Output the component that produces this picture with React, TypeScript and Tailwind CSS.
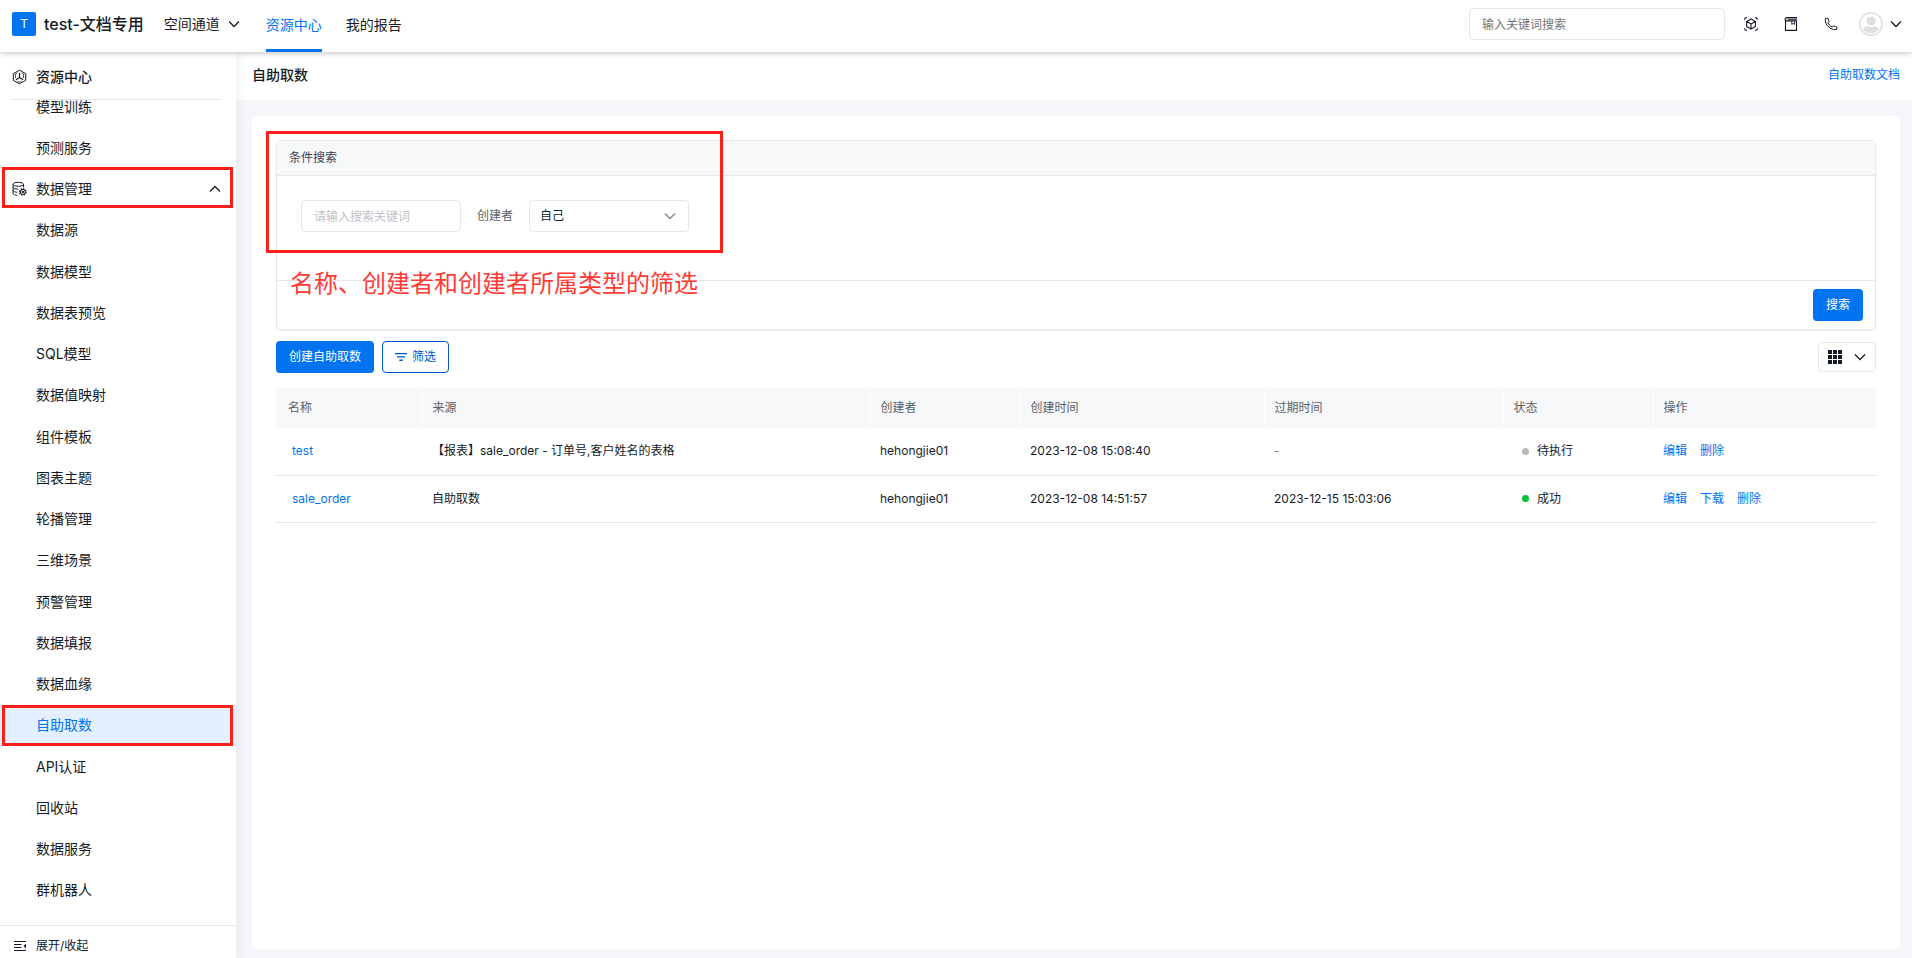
import { ReactNode } from 'react';

const MENU_BEFORE = ['模型训练', '预测服务'];

const MENU_ITEMS = [
    '数据源',
    '数据模型',
    '数据表预览',
    'SQL模型',
    '数据值映射',
    '组件模板',
    '图表主题',
    '轮播管理',
    '三维场景',
    '预警管理',
    '数据填报',
    '数据血缘',
    '自助取数',
    'API认证',
    '回收站',
    '数据服务',
    '群机器人',
];

interface TaskRow {
    name: string;
    source: string;
    creator: string;
    createdAt: string;
    expiresAt: string;
    status: '待执行' | '成功';
    actions: string[];
}

const ROWS: TaskRow[] = [
    {
        name: 'test',
        source: '【报表】sale_order - 订单号,客户姓名的表格',
        creator: 'hehongjie01',
        createdAt: '2023-12-08 15:08:40',
        expiresAt: '-',
        status: '待执行',
        actions: ['编辑', '删除'],
    },
    {
        name: 'sale_order',
        source: '自助取数',
        creator: 'hehongjie01',
        createdAt: '2023-12-08 14:51:57',
        expiresAt: '2023-12-15 15:03:06',
        status: '成功',
        actions: ['编辑', '下载', '删除'],
    },
];

const COLUMNS = [
    { title: '名称', width: 'w-[146px]' },
    { title: '来源', width: '' },
    { title: '创建者', width: 'w-[150px]' },
    { title: '创建时间', width: 'w-[244px]' },
    { title: '过期时间', width: 'w-[239px]' },
    { title: '状态', width: 'w-[150px]' },
    { title: '操作', width: 'w-[223px]' },
];

function Chevron({ up = false, className = '' }: { up?: boolean; className?: string }) {
    return (
        <svg viewBox="0 0 12 12" className={`h-3 w-3 shrink-0 ${className}`} fill="none" stroke="currentColor" strokeWidth="1.3">
            <path d={up ? 'M1 8.5 6 3.5l5 5' : 'M1 3.5l5 5 5-5'} />
        </svg>
    );
}

function HexIcon() {
    return (
        <svg viewBox="0 0 14 14" className="h-3.5 w-3.5 shrink-0 overflow-visible" fill="none" stroke="currentColor" strokeWidth="1">
            <path d="M7.500.2 13.700 3.600v6.800L7.500 13.800 1.300 10.400V3.600z" strokeLinejoin="round" />
            <path d="M7.500 2.800v4.600L4 9.800M7.500 7.400 11 9.800" strokeWidth="1.2" />
            <path d="M5.300 2.900 3.400 4v4M9.700 2.900 11.600 4v4M5.400 11.200l2.100 1 2.100-1" strokeWidth=".8" />
        </svg>
    );
}

function DatabaseIcon() {
    return (
        <svg viewBox="0 0 14 14" className="h-3.5 w-3.5 shrink-0 overflow-visible" fill="none" stroke="currentColor" strokeWidth="1">
            <ellipse cx="6.300" cy="2.300" rx="5.200" ry="2" />
            <path d="M1.100 2.300v9c0 1 1.700 1.900 4.200 2M11.500 2.300v3M1.100 5.300c0 1 2 1.900 5.200 1.900M1.100 8.300c0 1 1.700 1.900 4.200 2" />
            <circle cx="10.800" cy="9.900" r="3.200" strokeWidth="1.300" strokeDasharray="1.500 1" />
            <circle cx="10.800" cy="9.900" r="2.500" />
            <circle cx="10.800" cy="9.900" r=".8" fill="currentColor" />
        </svg>
    );
}

function CubeScanIcon() {
    return (
        <svg viewBox="0 0 14 14" className="h-3.5 w-3.5" fill="none" stroke="currentColor" strokeWidth="1.1">
            <path d="M2.800.6C1.300.6.6 1.300.6 2.800M11.200.6c1.500 0 2.200.7 2.200 2.200M2.800 13.400C1.300 13.400.6 12.700.6 11.200M11.200 13.400c1.500 0 2.200-.7 2.200-2.200" />
            <path d="M7 1.900 11.400 4.400v5.200L7 12.100 2.600 9.600V4.400zM2.600 4.400 7 7l4.400-2.600M7 7v5" strokeLinejoin="round" />
        </svg>
    );
}

function NotebookIcon() {
    return (
        <svg viewBox="0 0 14 14" className="h-3.5 w-3.5" fill="none" stroke="currentColor" strokeWidth="1.1">
            <path d="M13 .6H2.700a1.600 1.600 0 0 0 0 3.300H12.500v9.500H1.500V2.400M3.500 2.300H13" />
            <path d="M7.800 4v3.400L9.200 6.300l1.400 1.100V4" strokeWidth=".9" />
        </svg>
    );
}

function PhoneIcon() {
    return (
        <svg viewBox="0 0 14 14" className="h-3.5 w-3.5" fill="none" stroke="currentColor" strokeWidth="1" strokeLinejoin="round">
            <path d="M1.300 1.700 3.800 1.100 5.200 4.600 3.900 5.700C4.700 7.700 6.300 9.300 8.300 10.100L9.400 8.800 12.900 10.200 12.700 12.500C6.600 13.600.4 7.800 1.300 1.700z" />
        </svg>
    );
}

function Avatar() {
    return (
        <svg viewBox="0 0 24 24" className="h-6 w-6">
            <circle cx="12" cy="12" r="11.2" fill="#fff" stroke="#dedfe3" strokeWidth="1.5" />
            <circle cx="12" cy="9" r="4.6" fill="#dedfe3" />
            <path d="M3.900 16.800c1.600-2 3.600-2.200 5.100-2.200 1.900.9 4.100.9 6 0 1.500 0 3.500.2 5.100 2.200A9.400 9.400 0 0 1 3.900 16.800z" fill="#dedfe3" />
        </svg>
    );
}

function HeaderIconButton({ label, children }: { label: string; children: ReactNode }) {
    return (
        <button type="button" aria-label={label} className="flex h-6 w-6 items-center justify-center">
            {children}
        </button>
    );
}

function Header() {
    return (
        <header className="relative z-20 flex h-13 shrink-0 bg-white pr-2.5 pl-3 text-sm shadow-[0_1px_6px_rgba(0,0,0,0.25)]">
            <div className="flex items-center pb-1">
                <span className="flex h-6 w-6 items-center justify-center rounded-xs bg-[#0073f0] text-xs text-white">T</span>
                <span className="ml-2 text-base font-medium">test-文档专用</span>
                <button type="button" className="ml-5 flex items-center gap-2">
                    空间通道
                    <Chevron />
                </button>
            </div>
            <nav className="ml-[26px] flex gap-6">
                <a href="#resource" className="flex items-center border-b-3 border-[#0073f0] text-[#0073f0]">资源中心</a>
                <a href="#report" className="flex items-center border-b-3 border-transparent">我的报告</a>
            </nav>
            <div className="ml-auto flex items-center gap-4 pb-1">
                <input
                    type="search"
                    aria-label="输入关键词搜索"
                    placeholder="输入关键词搜索"
                    className="-mr-0.5 h-8 w-64 rounded-sm border border-[#e6e7eb] px-3 text-xs outline-none placeholder:text-[#757575]"
                />
                <HeaderIconButton label="场景"><CubeScanIcon /></HeaderIconButton>
                <HeaderIconButton label="文档"><NotebookIcon /></HeaderIconButton>
                <HeaderIconButton label="联系"><PhoneIcon /></HeaderIconButton>
                <button type="button" aria-label="账户" className="flex items-center gap-[7px]">
                    <Avatar />
                    <Chevron />
                </button>
            </div>
        </header>
    );
}

function Highlight({ className = 'inset-y-0' }: { className?: string }) {
    return <span className={`pointer-events-none absolute right-[3px] left-0.5 border-3 border-[#ff1f1a] ${className}`} />;
}

function Sidebar() {
    return (
        <aside className="relative z-10 flex w-59 shrink-0 flex-col bg-white text-sm shadow-[0_0_12px_rgba(0,0,0,0.08)]">
            <div className="relative z-10 mr-4 ml-3 flex h-12 shrink-0 items-center gap-2.5 border-b border-[#e6e7eb] bg-white pt-0.5 font-medium">
                <HexIcon />
                资源中心
            </div>
            <ul className="-mt-3.5 mb-3.5 flex flex-1 flex-col">
                {MENU_BEFORE.map((item) => (
                    <li key={item} className="flex flex-1 items-center pl-9">
                        <a href="#menu">{item}</a>
                    </li>
                ))}
                <li className="relative flex flex-1">
                    <button type="button" className="flex flex-1 items-center gap-2.5 pr-[15px] pl-3">
                        <DatabaseIcon />
                        数据管理
                        <Chevron up className="ml-auto" />
                    </button>
                    <Highlight className="-top-0.5 bottom-0.5" />
                </li>
                {MENU_ITEMS.map((item) => {
                    const active = item === '自助取数';
                    return (
                        <li
                            key={item}
                            className={`relative flex flex-1 items-center pl-9 ${active ? 'bg-[#e3f0ff] text-[#0073f0]' : ''}`}
                        >
                            <a href="#menu">{item}</a>
                            {active && <Highlight />}
                        </li>
                    );
                })}
            </ul>
            <button type="button" className="flex h-[33px] shrink-0 items-center gap-2.5 border-t border-[#e6e7eb] pt-[7px] pl-3.5 text-xs">
                <svg viewBox="0 0 12 12" className="h-3 w-3" fill="none" stroke="currentColor" strokeWidth="1.1">
                    <path d="M0 1.500h12M0 4.500h7.500M0 7.500h7.500M0 10.500h12" />
                    <path d="M12 3.800 9.300 6 12 8.200z" fill="currentColor" stroke="none" />
                </svg>
                展开/收起
            </button>
        </aside>
    );
}

function SearchPanel() {
    return (
        <section className="relative rounded-sm border border-[#e6e7eb] shadow-[0_1px_2px_rgba(0,0,0,0.06)]">
            <h2 className="flex h-[35px] items-center border-b border-[#e6e7eb] bg-[#f7f8fa] px-3 text-[#3b4252]">条件搜索</h2>
            <div className="flex h-[105px] items-start gap-4 border-b border-[#e6e7eb] px-6 pt-6">
                <input
                    type="text"
                    aria-label="请输入搜索关键词"
                    placeholder="请输入搜索关键词"
                    className="h-8 w-40 rounded-sm border border-[#e6e7eb] px-3 outline-none placeholder:text-[#bfc1c7]"
                />
                <label htmlFor="creator" className="leading-8 text-[#5c5f66]">创建者</label>
                <div className="relative">
                    <select id="creator" className="h-8 w-40 appearance-none rounded-sm border border-[#e6e7eb] bg-white px-2.5 outline-none">
                        <option>自己</option>
                    </select>
                    <Chevron className="pointer-events-none absolute top-2.5 right-[13px] text-[#84868c]" />
                </div>
            </div>
            <div className="flex h-12 items-center justify-end px-3">
                <button type="button" className="h-8 rounded-sm bg-[#0073f0] px-[13px] text-white">搜索</button>
            </div>
            {/* annotation drawn over the filter area */}
            <div className="pointer-events-none absolute -top-2.5 -left-[11px] h-[122px] w-[457px] border-3 border-[#ff1f1a]" />
            <p className="pointer-events-none absolute top-[127px] left-[13px] text-2xl text-[#ff3b36]">名称、创建者和创建者所属类型的筛选</p>
        </section>
    );
}

function Toolbar() {
    return (
        <div className="mt-[11px] flex h-8 items-center gap-2">
            <button type="button" className="h-8 rounded-sm bg-[#0073f0] px-[13px] text-white">创建自助取数</button>
            <button type="button" className="flex h-8 items-center gap-[5px] rounded-sm border border-[#0055cc] px-3 text-[#0055cc]">
                <svg viewBox="0 0 12 12" className="h-3 w-3" fill="currentColor">
                    <path d="M0 2h12v1.300H0zM2 5.300h8v1.300H2zM4.300 8.600h3.400v1.300H4.300z" />
                </svg>
                筛选
            </button>
            <button type="button" aria-label="视图" className="ml-auto flex h-[30px] items-center gap-3 rounded-sm border border-[#e6e7eb] px-[9px]">
                <svg viewBox="0 0 14 14" className="h-3.5 w-3.5" fill="currentColor">
                    <path d="M0 0h4v4H0zM5 0h4v4H5zM10 0h4v4h-4zM0 5h4v4H0zM5 5h4v4H5zM10 5h4v4h-4zM0 10h4v4H0zM5 10h4v4H5zM10 10h4v4h-4z" />
                </svg>
                <Chevron />
            </button>
        </div>
    );
}

function TaskTable() {
    return (
        <table className="mt-[15px] w-full table-fixed text-left">
            <thead>
                <tr className="h-10 bg-[#f7f8fa] text-[#5c5f66]">
                    {COLUMNS.map((column) => (
                        <th
                            key={column.title}
                            className={`border-r border-white pl-2.5 font-normal first:rounded-tl-sm first:pl-3 last:rounded-tr-sm last:border-r-0 ${column.width}`}
                        >
                            {column.title}
                        </th>
                    ))}
                </tr>
            </thead>
            <tbody>
                {ROWS.map((row) => (
                    <tr key={row.name} className="h-[47px] border-b border-[#e6e7eb]">
                        <td className="pl-4"><a href="#task" className="text-[#0073f0]">{row.name}</a></td>
                        <td className="pl-2.5">{row.source}</td>
                        <td className="pl-2.5">{row.creator}</td>
                        <td className="pl-2.5">{row.createdAt}</td>
                        <td className={`pl-2.5 ${row.expiresAt === '-' ? 'text-[#84868c]' : ''}`}>{row.expiresAt}</td>
                        <td className="pl-[19px]">
                            <span className="flex items-center gap-2">
                                <span className={`h-[7px] w-[7px] rounded-full ${row.status === '成功' ? 'bg-[#07c035]' : 'bg-[#b8babf]'}`} />
                                {row.status}
                            </span>
                        </td>
                        <td className="pl-2.5">
                            <span className="flex gap-[13px]">
                                {row.actions.map((action) => (
                                    <a key={action} href="#action" className="text-[#0073f0]">{action}</a>
                                ))}
                            </span>
                        </td>
                    </tr>
                ))}
            </tbody>
        </table>
    );
}

export default function App() {
    return (
        <div className="flex h-screen flex-col overflow-hidden bg-[#f5f6f9] font-[Inter,'Noto_Sans_CJK_SC',sans-serif] text-[#151b26]">
            <Header />
            <div className="flex min-h-0 flex-1">
                <Sidebar />
                <main className="flex min-w-0 flex-1 flex-col text-xs">
                    <div className="flex h-12 shrink-0 items-center justify-between bg-white pr-3 pb-0.5 pl-4">
                        <h1 className="text-sm font-medium">自助取数</h1>
                        <a href="#docs" className="text-[#0073f0]">自助取数文档</a>
                    </div>
                    <div className="mt-4 mr-3 mb-[9px] ml-4 flex-1 rounded-md bg-white p-6">
                        <SearchPanel />
                        <Toolbar />
                        <TaskTable />
                    </div>
                </main>
            </div>
        </div>
    );
}
